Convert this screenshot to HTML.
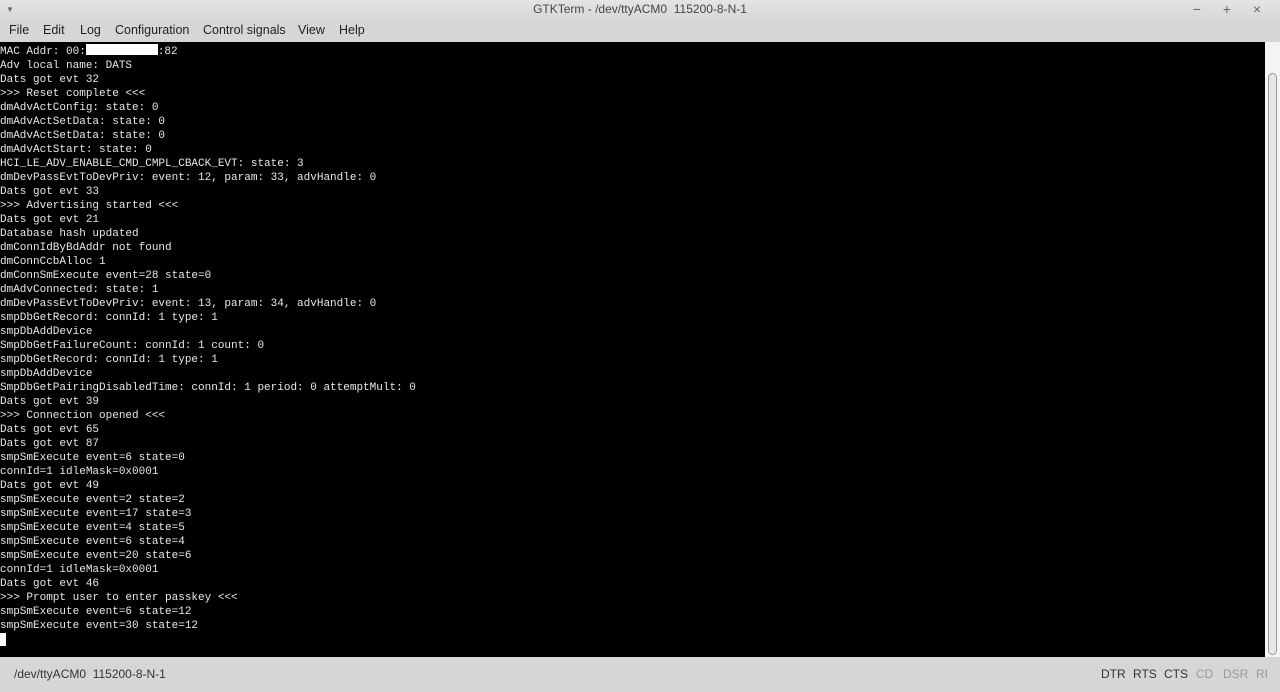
<!DOCTYPE html>
<html><head><style>
body{margin:0;width:1280px;height:692px;overflow:hidden;background:#d6d6d6;font-family:"Liberation Sans",sans-serif;position:relative}
#title{position:absolute;top:0;left:0;width:1280px;height:19px;background:linear-gradient(#e4e4e4,#d8d8d8);font-size:12px;color:#444;text-align:center;line-height:19px}
#menu{position:absolute;top:19px;left:0;width:1280px;height:23px;background:#d6d6d6;font-size:12.5px;color:#222;line-height:23px}
#menu span{position:absolute}
#term{position:absolute;top:42px;left:0;width:1265px;height:615px;background:#000;color:#e8e8e8;font-family:"Liberation Mono",monospace;font-size:11px;line-height:14px;white-space:pre;padding-top:2px;box-sizing:border-box}
#sb{position:absolute;top:42px;left:1265px;width:15px;height:615px;background:#f4f4f4}
#thumb{position:absolute;top:73px;left:1268px;width:9px;height:582px;border:1px solid #999;border-radius:5px;background:#e6e6e6;box-sizing:border-box}
#status{position:absolute;top:657px;left:0;width:1280px;height:35px;background:#d6d6d6;font-size:12px;line-height:35px;color:#333}
.w{display:inline-block;background:#fff;width:72px;height:11px;vertical-align:-1px}
</style></head><body>
<div id="title">GTKTerm - /dev/ttyACM0&nbsp; 115200-8-N-1
<span style="position:absolute;left:6px;top:0;font-size:8px;color:#666">▼</span>
<span style="position:absolute;right:10px;top:0;font-size:14px;color:#666;letter-spacing:9px">− + ×</span></div>
<div id="menu"><span style="left:9px">File</span><span style="left:43px">Edit</span><span style="left:80px">Log</span><span style="left:115px">Configuration</span><span style="left:203px">Control signals</span><span style="left:298px">View</span><span style="left:339px">Help</span></div>
<div id="term">MAC Addr: 00:<span class="w"></span>:82
Adv local name: DATS
Dats got evt 32
&gt;&gt;&gt; Reset complete &lt;&lt;&lt;
dmAdvActConfig: state: 0
dmAdvActSetData: state: 0
dmAdvActSetData: state: 0
dmAdvActStart: state: 0
HCI_LE_ADV_ENABLE_CMD_CMPL_CBACK_EVT: state: 3
dmDevPassEvtToDevPriv: event: 12, param: 33, advHandle: 0
Dats got evt 33
&gt;&gt;&gt; Advertising started &lt;&lt;&lt;
Dats got evt 21
Database hash updated
dmConnIdByBdAddr not found
dmConnCcbAlloc 1
dmConnSmExecute event=28 state=0
dmAdvConnected: state: 1
dmDevPassEvtToDevPriv: event: 13, param: 34, advHandle: 0
smpDbGetRecord: connId: 1 type: 1
smpDbAddDevice
SmpDbGetFailureCount: connId: 1 count: 0
smpDbGetRecord: connId: 1 type: 1
smpDbAddDevice
SmpDbGetPairingDisabledTime: connId: 1 period: 0 attemptMult: 0
Dats got evt 39
&gt;&gt;&gt; Connection opened &lt;&lt;&lt;
Dats got evt 65
Dats got evt 87
smpSmExecute event=6 state=0
connId=1 idleMask=0x0001
Dats got evt 49
smpSmExecute event=2 state=2
smpSmExecute event=17 state=3
smpSmExecute event=4 state=5
smpSmExecute event=6 state=4
smpSmExecute event=20 state=6
connId=1 idleMask=0x0001
Dats got evt 46
&gt;&gt;&gt; Prompt user to enter passkey &lt;&lt;&lt;
smpSmExecute event=6 state=12
smpSmExecute event=30 state=12
<span style="display:inline-block;width:6px;height:13px;background:#fff;vertical-align:-3px"></span></div>
<div id="sb"></div><div id="thumb"></div>
<div id="status"><span style="position:absolute;left:14px">/dev/ttyACM0&nbsp; 115200-8-N-1</span>
<span style="position:absolute;left:1101px">DTR</span><span style="position:absolute;left:1133px">RTS</span><span style="position:absolute;left:1164px">CTS</span><span style="position:absolute;left:1196px;color:#999">CD</span><span style="position:absolute;left:1223px;color:#999">DSR</span><span style="position:absolute;left:1256px;color:#999">RI</span></div>
</body></html>
